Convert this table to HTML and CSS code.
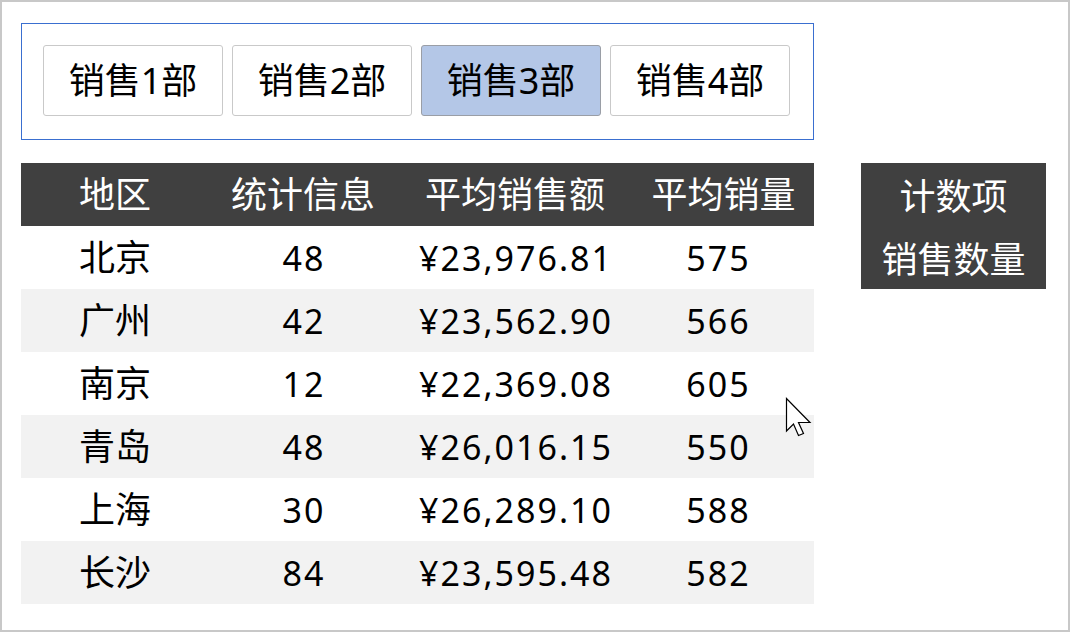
FILE: index.html
```html
<!DOCTYPE html>
<html lang="zh-CN">
<head>
<meta charset="utf-8">
<link rel="stylesheet" href="styles.css">
</head>
<body>
<div class="frame">
  <div class="panel">
    <button class="btn">销售1部</button>
    <button class="btn">销售2部</button>
    <button class="btn active">销售3部</button>
    <button class="btn">销售4部</button>
  </div>
  <div class="row">
    <table class="grid">
      <colgroup>
        <col class="c1"><col class="c2"><col class="c3"><col class="c4">
      </colgroup>
      <thead>
        <tr><th>地区</th><th>统计信息</th><th>平均销售额</th><th>平均销量</th></tr>
      </thead>
      <tbody>
        <tr><td>北京</td><td class="num">48</td><td class="num">¥23,976.81</td><td class="num last">575</td></tr>
        <tr><td>广州</td><td class="num">42</td><td class="num">¥23,562.90</td><td class="num last">566</td></tr>
        <tr><td>南京</td><td class="num">12</td><td class="num">¥22,369.08</td><td class="num last">605</td></tr>
        <tr><td>青岛</td><td class="num">48</td><td class="num">¥26,016.15</td><td class="num last">550</td></tr>
        <tr><td>上海</td><td class="num">30</td><td class="num">¥26,289.10</td><td class="num last">588</td></tr>
        <tr><td>长沙</td><td class="num">84</td><td class="num">¥23,595.48</td><td class="num last">582</td></tr>
      </tbody>
    </table>
    <div class="side">
      <div class="side-line">计数项</div>
      <div class="side-line">销售数量</div>
    </div>
  </div>
  <svg class="cursor" width="28" height="40" viewBox="0 0 28 40">
    <path d="M1.5 1.5 L1.5 34 L8.5 27 L13.5 38.5 L18.5 36.5 L13.5 25.5 L25 25.5 Z" fill="#fff" stroke="#000" stroke-width="1.2" stroke-linejoin="miter"/>
  </svg>
</div>
</body>
</html>
```

FILE: styles.css
```css
* { box-sizing: border-box; }
html, body { margin: 0; padding: 0; background: #fff; }
body { font-family: "Noto Sans", "Noto Sans CJK SC", sans-serif; }
.frame {
  position: relative;
  width: 1070px;
  height: 632px;
  border: 2px solid #c8c8c8;
  padding: 21px 0 0 19px;
  display: flex;
  flex-direction: column;
  gap: 23px;
}
.panel {
  width: 793px;
  height: 117px;
  border: 1px solid #3a6fd0;
  padding: 21px 0 0 21px;
  display: flex;
  gap: 9px;
  align-items: flex-start;
}
.btn {
  width: 180px;
  height: 71px;
  margin: 0;
  border: 1px solid #c9c9c9;
  border-radius: 3px;
  background: #fff;
  font-family: "Noto Sans", "Noto Sans CJK SC", sans-serif;
  font-size: 36px;
  color: #000;
  padding: 0;
  line-height: 1;
}
.btn.active { background: #b4c7e7; border-color: #9a9ea6; }
.row { display: flex; align-items: flex-start; }
.grid {
  width: 793px;
  border-collapse: collapse;
  table-layout: fixed;
  font-size: 36px;
}
.c1 { width: 188px; }
.c2 { width: 188px; }
.c3 { width: 236px; }
.c4 { width: 181px; }
.grid th, .grid td {
  height: 63px;
  padding: 0;
  text-align: center;
  font-weight: normal;
  line-height: 1;
  white-space: nowrap;
}
.grid th { background: #404040; color: #fff; }
.grid td { color: #000; }
.grid td.num { font-size: 34px; letter-spacing: 2px; padding-left: 2px; }
.grid td.last { padding-left: 0; padding-right: 10px; }
.grid tbody tr:nth-child(even) td { background: #f2f2f2; }
.side {
  margin-left: 47px;
  width: 185px;
  background: #404040;
  color: #fff;
  font-size: 36px;
}
.side-line {
  height: 63px;
  display: flex;
  align-items: center;
  justify-content: center;
}
.cursor { position: absolute; left: 783px; top: 395px; }
```
